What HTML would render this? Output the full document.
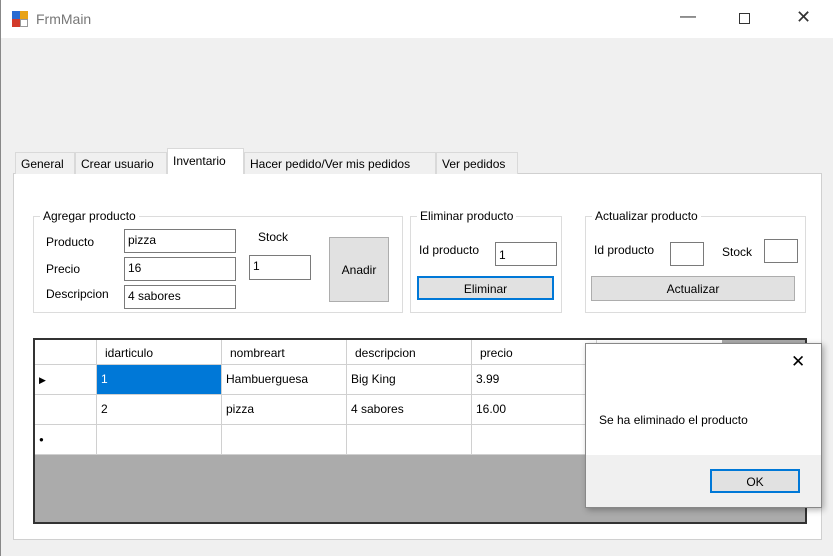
<!DOCTYPE html><html><head><style>
body{margin:0;width:833px;height:556px;background:#f0f0f0;font-family:"Liberation Sans",sans-serif;font-size:12px;color:#000;position:relative;overflow:hidden}
div{position:absolute;box-sizing:border-box}
.t{white-space:nowrap}
.tb{background:#fff;border:1px solid #7a7a7a;padding:3px 0 0 3px}
.btn{background:#e1e1e1;border:1px solid #adadad;text-align:center}
.gb{border:1px solid #dcdcdc}
.gl{background:#fff;padding:0 3px;top:-8px;left:6px}
.tab{top:152px;height:22px;border:1px solid #d9d9d9;border-bottom:none;background:#f0f0f0;padding:4px 5px 0}
.c{border-right:1px solid #d0d0d0;border-bottom:1px solid #d0d0d0;height:30px;padding:7px 4px 0;background:#fff}
</style></head><body>
<div style="left:0;top:0;width:833px;height:38px;background:#fff"></div>
<div style="left:0;top:0;width:1px;height:556px;background:#888"></div>
<div style="left:12px;top:11px;width:8px;height:8px;background:#2a6bd1"></div>
<div style="left:20px;top:11px;width:8px;height:8px;background:#e8a317"></div>
<div style="left:12px;top:19px;width:8px;height:8px;background:#d23a2a"></div>
<div style="left:20px;top:19px;width:8px;height:8px;background:#fff;border:1px solid #999"></div>
<div class="t" style="left:36px;top:11px;font-size:14px;color:#777">FrmMain</div>
<div class="t" style="left:680px;top:8px;font-size:16px;color:#333">&#8212;</div>
<div style="left:739px;top:13px;width:11px;height:11px;border:1px solid #333"></div>
<div class="t" style="left:796px;top:7px;font-size:18px;color:#333">&#10005;</div>

<div style="left:13px;top:173px;width:809px;height:367px;background:#fff;border:1px solid #d0d0d0"></div>
<div class="tab" style="left:15px;width:60px">General</div>
<div class="tab" style="left:75px;width:92px">Crear usuario</div>
<div class="tab" style="left:167px;top:148px;height:26px;width:77px;background:#fff;padding-top:5px">Inventario</div>
<div class="tab" style="left:244px;width:192px">Hacer pedido/Ver mis pedidos</div>
<div class="tab" style="left:436px;width:82px">Ver pedidos</div>

<div class="gb" style="left:33px;top:216px;width:370px;height:97px"><div class="gl t">Agregar producto</div></div>
<div class="t" style="left:46px;top:235px">Producto</div>
<div class="t" style="left:46px;top:262px">Precio</div>
<div class="t" style="left:46px;top:287px">Descripcion</div>
<div class="tb" style="left:124px;top:229px;width:112px;height:24px">pizza</div>
<div class="tb" style="left:124px;top:257px;width:112px;height:24px">16</div>
<div class="tb" style="left:124px;top:285px;width:112px;height:24px">4 sabores</div>
<div class="t" style="left:258px;top:230px">Stock</div>
<div class="tb" style="left:249px;top:255px;width:62px;height:25px">1</div>
<div class="btn" style="left:329px;top:237px;width:60px;height:65px;padding-top:25px">Anadir</div>

<div class="gb" style="left:410px;top:216px;width:152px;height:97px"><div class="gl t">Eliminar producto</div></div>
<div class="t" style="left:419px;top:243px">Id producto</div>
<div class="tb" style="left:495px;top:242px;width:62px;height:24px;padding-top:5px">1</div>
<div class="btn" style="left:417px;top:276px;width:137px;height:24px;border:2px solid #0078d7;padding-top:4px">Eliminar</div>

<div class="gb" style="left:585px;top:216px;width:221px;height:97px"><div class="gl t">Actualizar producto</div></div>
<div class="t" style="left:594px;top:243px">Id producto</div>
<div class="tb" style="left:670px;top:242px;width:34px;height:24px"></div>
<div class="t" style="left:722px;top:245px">Stock</div>
<div class="tb" style="left:764px;top:239px;width:34px;height:24px"></div>
<div class="btn" style="left:591px;top:276px;width:204px;height:25px;padding-top:5px">Actualizar</div>

<div style="left:33px;top:338px;width:774px;height:186px;background:#ababab;border:2px solid #333"></div>
<div style="left:35px;top:340px;width:687px;height:25px;background:#fff;border-bottom:1px solid #d0d0d0"></div>
<div class="t" style="left:105px;top:346px">idarticulo</div>
<div class="t" style="left:230px;top:346px">nombreart</div>
<div class="t" style="left:355px;top:346px">descripcion</div>
<div class="t" style="left:480px;top:346px">precio</div>
<div style="left:96px;top:340px;width:1px;height:25px;background:#d0d0d0"></div>
<div style="left:221px;top:340px;width:1px;height:25px;background:#d0d0d0"></div>
<div style="left:346px;top:340px;width:1px;height:25px;background:#d0d0d0"></div>
<div style="left:471px;top:340px;width:1px;height:25px;background:#d0d0d0"></div>
<div style="left:596px;top:340px;width:1px;height:25px;background:#d0d0d0"></div>

<div class="c" style="left:35px;top:365px;width:62px"><span style="font-size:9px">&#9654;</span></div>
<div class="c" style="left:97px;top:365px;width:125px;background:#0078d7;color:#fff">1</div>
<div class="c" style="left:222px;top:365px;width:125px">Hambuerguesa</div>
<div class="c" style="left:347px;top:365px;width:125px">Big King</div>
<div class="c" style="left:472px;top:365px;width:125px">3.99</div>
<div class="c" style="left:35px;top:395px;width:62px"></div>
<div class="c" style="left:97px;top:395px;width:125px">2</div>
<div class="c" style="left:222px;top:395px;width:125px">pizza</div>
<div class="c" style="left:347px;top:395px;width:125px">4 sabores</div>
<div class="c" style="left:472px;top:395px;width:125px">16.00</div>
<div class="c" style="left:35px;top:425px;width:62px;font-size:8px;padding-top:10px">&#9679;</div>
<div class="c" style="left:97px;top:425px;width:125px"></div>
<div class="c" style="left:222px;top:425px;width:125px"></div>
<div class="c" style="left:347px;top:425px;width:125px"></div>
<div class="c" style="left:472px;top:425px;width:125px"></div>

<div style="left:585px;top:343px;width:237px;height:165px;background:#fff;border:1px solid #888;box-shadow:2px 2px 6px rgba(0,0,0,.3)"></div>
<div style="left:586px;top:455px;width:235px;height:52px;background:#f0f0f0"></div>
<div class="t" style="left:791px;top:352px;font-size:17px">&#10005;</div>
<div class="t" style="left:599px;top:413px">Se ha eliminado el producto</div>
<div class="btn" style="left:710px;top:469px;width:90px;height:24px;border:2px solid #0078d7;padding-top:4px">OK</div>
</body></html>
